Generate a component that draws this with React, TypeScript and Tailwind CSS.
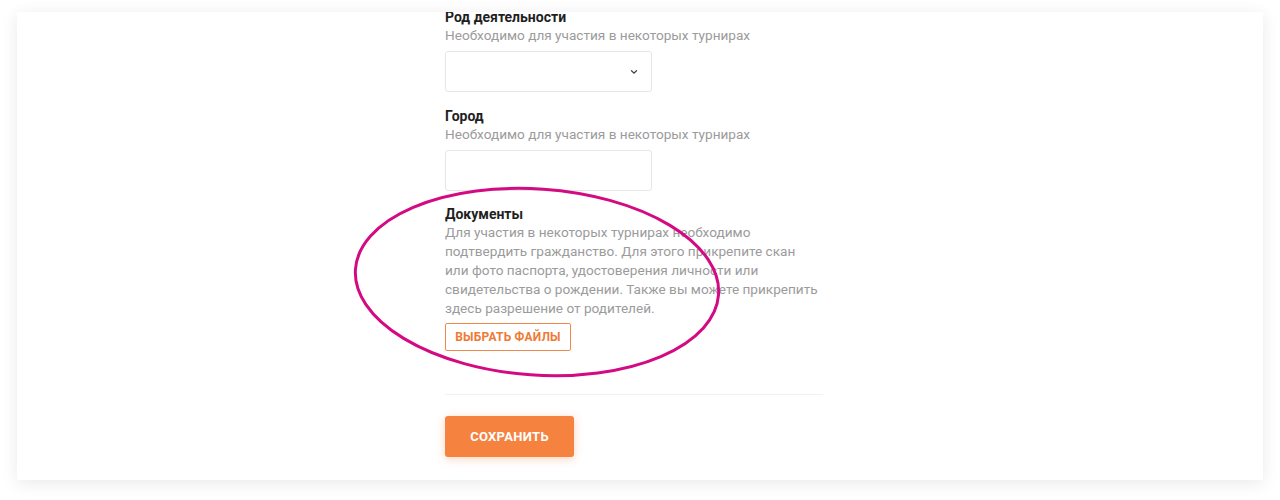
import React from "react";

const font = { fontFamily: "Roboto, 'Noto Sans', sans-serif" };

const FieldHead = ({ title, hint }: { title: string; hint: string }) => (
  <>
    <div className="text-[14px] leading-[18px] font-bold text-[#1f1f1f]">{title}</div>
    <div className="whitespace-nowrap text-[13.6px] leading-[18px] text-[#9b9b9b]">{hint}</div>
  </>
);

const App = () => {
  return (
    <div className="relative h-[500px] w-[1280px] overflow-hidden bg-white" style={font}>
      <div className="mx-[17px] mt-[12px] h-[468px] overflow-hidden bg-white shadow-[0_3px_16px_rgba(0,0,0,0.09)]">
        <div className="ml-[428px] mt-[-4px] w-[380px]">
          <FieldHead title="Род деятельности" hint="Необходимо для участия в некоторых турнирах" />
          <div className="mt-[7px] flex h-[41px] w-[207px] items-center justify-end rounded-[3px] border border-[#e6e6e6] pr-[13px]">
            <svg width="8" height="6" viewBox="0 0 8 6" fill="none">
              <path d="M1.5 1.8 L4 4.2 L6.5 1.8" stroke="#444" strokeWidth="1.3" strokeLinecap="round" />
            </svg>
          </div>

          <div className="mt-[15px]">
            <FieldHead title="Город" hint="Необходимо для участия в некоторых турнирах" />
          </div>
          <div className="mt-[7px] h-[41px] w-[207px] rounded-[3px] border border-[#e6e6e6]" />

          <div className="mt-[14px]">
            <div className="text-[14px] leading-[18px] font-bold text-[#1f1f1f]">Документы</div>
            <p className="whitespace-nowrap text-[13.6px] leading-[19px] text-[#9b9b9b]">
              Для участия в некоторых турнирах необходимо
              <br />
              подтвердить гражданство. Для этого прикрепите скан
              <br />
              или фото паспорта, удостоверения личности или
              <br />
              свидетельства о рождении. Также вы можете прикрепить
              <br />
              здесь разрешение от родителей.
            </p>
          </div>
          <button className="mt-[5px] flex h-[28px] w-[126px] items-center justify-center rounded-[2px] border-[1.5px] border-[#f2894c] text-[12px] font-bold tracking-[0.2px] text-[#ef7a36]">
            ВЫБРАТЬ ФАЙЛЫ
          </button>

          <div className="mt-[43px] h-px w-[378px] bg-[#f1f1f1]" />

          <button className="mt-[21px] flex h-[41px] w-[129px] items-center justify-center rounded-[3px] bg-[#f6823f] text-[13px] font-bold tracking-[0.3px] text-white shadow-[0_2px_8px_rgba(246,130,63,0.35)]">
            СОХРАНИТЬ
          </button>
        </div>
      </div>

      <svg className="pointer-events-none absolute left-0 top-0" width="1280" height="500">
        <ellipse
          cx="537"
          cy="282"
          rx="182"
          ry="93"
          transform="rotate(4 537 282)"
          fill="none"
          stroke="#d40a82"
          strokeWidth="3"
        />
      </svg>
    </div>
  );
};

export default App;
